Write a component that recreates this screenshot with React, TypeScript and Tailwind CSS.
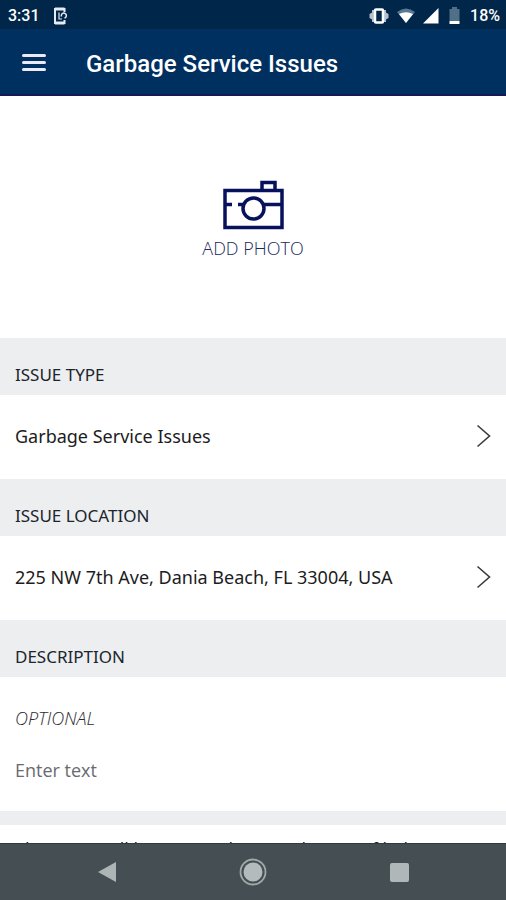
import type { ReactNode } from "react"

function StatusBar() {
  return (
    <div className="flex h-[29px] shrink-0 items-center bg-[#00264a] pl-2 pr-1.5 pt-0.5 font-['Roboto',sans-serif] text-base font-medium text-white">
      <span>3:31</span>
      <svg className="ml-3 h-[18px] w-4" viewBox="0 0 16 18" fill="none" stroke="#e8eaf4" strokeWidth="2">
        <path d="M12.500 5V2H3v14h9.500v-3" />
        <path d="M3 2h9.500M3 16h9.500" strokeWidth="3" />
        <path d="M7 5.500V12h3" strokeWidth="1.200" />
        <path d="M9.500 9.500a2.500 2.500 0 1 1 3 1.500" strokeWidth="1.500" />
      </svg>
      <div className="ml-auto flex items-center">
        {/* vibrate */}
        <svg className="h-4 w-5" viewBox="0 0 20 16">
          <path d="M5 2H3v2.500L.5 6v4L3 11.500V14h2zM15 2h2v2.500L19.500 6v4L17 11.500V14h-2z" fill="#b4bfce" />
          <rect x="6" y="1.500" width="8" height="13" rx="1" fill="none" stroke="#fff" strokeWidth="2.500" />
        </svg>
        {/* wifi */}
        <svg className="ml-2 h-4 w-[18px]" viewBox="0 0 18 16">
          <path d="M0 4Q9-3 18 4L9 15z" fill="#587896" />
          <path d="M2 6Q9 2.500 16 6L9 15z" fill="#fff" />
        </svg>
        {/* signal */}
        <svg className="ml-2 h-4 w-4" viewBox="0 0 16 16">
          <path d="M15.500 0v15.500H0z" fill="#fff" />
        </svg>
        {/* battery */}
        <svg className="ml-2.5 h-[18px] w-[11px]" viewBox="0 0 11 18">
          <path d="M3 0h5v2h2.500v12H.5V2H3z" fill="#4f7086" />
          <path d="M.5 14h10v3H.5z" fill="#fff" />
        </svg>
        <span className="ml-2.5">18%</span>
      </div>
    </div>
  )
}

function AppBar() {
  return (
    <header className="flex h-[67px] shrink-0 items-center border-b-2 border-[#14195a] bg-[#00305f] pl-[22px] pt-0.5 text-white">
      <button type="button" aria-label="Open menu" className="flex w-6 flex-col gap-1">
        <span className="h-[3px] rounded-full bg-[#eceaf8]" />
        <span className="h-[3px] rounded-full bg-[#eceaf8]" />
        <span className="h-[3px] rounded-full bg-[#eceaf8]" />
      </button>
      <h1 className="ml-10 pt-0.5 font-['Roboto',sans-serif] text-2xl font-medium">Garbage Service Issues</h1>
    </header>
  )
}

function CameraIcon() {
  return (
    <svg className="h-[50px] w-[62px]" viewBox="0 0 62 50" fill="none" stroke="#08125c" strokeWidth="3.500">
      <path d="M3 10.500h57v37H3z" />
      <path d="M40 10.500v-8h13v8" />
      <path d="M3 24.500h7M16 24.500h5M41 24.500h18" />
      <circle cx="31.500" cy="28.500" r="10.500" />
    </svg>
  )
}

function SectionHeading({ children }: { children: ReactNode }) {
  return (
    <h2 className="flex h-[57px] items-center bg-[#eceef0] px-[15px] pt-4 text-[17px] text-[#20242c]">
      {children}
    </h2>
  )
}

function PickerRow({ value }: { value: string }) {
  return (
    <button type="button" className="flex h-[84px] w-full items-center justify-between px-[15px] pb-0.5 text-left text-lg text-[#1c1c22]">
      <span>{value}</span>
      <svg className="h-6 w-[15px]" viewBox="0 0 15 24" fill="none" stroke="#3c3c40" strokeWidth="1.600">
        <path d="M1.500 1.500L13.500 12L1.500 22.500" />
      </svg>
    </button>
  )
}

function NavBar() {
  return (
    <nav className="grid h-[57px] shrink-0 grid-cols-[1fr_80px_1fr] items-center border-t border-[#2f3b3e] bg-[#454e52]">
      <button type="button" aria-label="Back" className="justify-self-center">
        <svg className="h-[22px] w-5" viewBox="0 0 20 22">
          <path d="M19 1v20L1 11z" fill="#adb5b7" />
        </svg>
      </button>
      <button type="button" aria-label="Home" className="justify-self-center">
        <svg className="h-7 w-7" viewBox="0 0 28 28">
          <circle cx="14" cy="14" r="12.500" fill="none" stroke="#a0a8aa" strokeWidth="1.800" />
          <circle cx="14" cy="14" r="9.500" fill="#b4bbbd" />
        </svg>
      </button>
      <button type="button" aria-label="Recent apps" className="justify-self-center">
        <span className="block size-[19px] rounded-xs bg-[#b0b7b8]" />
      </button>
    </nav>
  )
}

export default function App() {
  return (
    <div className="flex h-screen flex-col bg-white font-['Noto_Sans',sans-serif]">
      <StatusBar />
      <AppBar />
      <main className="min-h-0 flex-1 overflow-hidden">
        <button type="button" className="flex h-[242px] w-full flex-col items-center justify-center gap-1 pt-2 font-['Open_Sans',sans-serif] text-lg font-light text-[#20285c]">
          <CameraIcon />
          <span>ADD PHOTO</span>
        </button>

        <SectionHeading>ISSUE TYPE</SectionHeading>
        <PickerRow value="Garbage Service Issues" />

        <SectionHeading>ISSUE LOCATION</SectionHeading>
        <PickerRow value="225 NW 7th Ave, Dania Beach, FL 33004, USA" />

        <SectionHeading>
          <label htmlFor="description">DESCRIPTION</label>
        </SectionHeading>
        <div className="flex h-[134px] flex-col gap-6 px-[15px] pt-[27px] font-['Open_Sans',sans-serif]">
          <span className="text-lg font-light italic text-[#2c2c30]">OPTIONAL</span>
          <input
            id="description"
            type="text"
            placeholder="Enter text"
            className="h-7 w-full text-lg text-[#1c1c22] outline-none placeholder:text-[#6a6a70]"
          />
        </div>

        <div className="h-3.5 bg-[#eceef0]" />
        <p className="px-[15px] pt-2.5 font-['Open_Sans',sans-serif] text-lg text-[#1c1c22]">This issue will be sent to the city when it is filed</p>
      </main>
      <NavBar />
    </div>
  )
}
